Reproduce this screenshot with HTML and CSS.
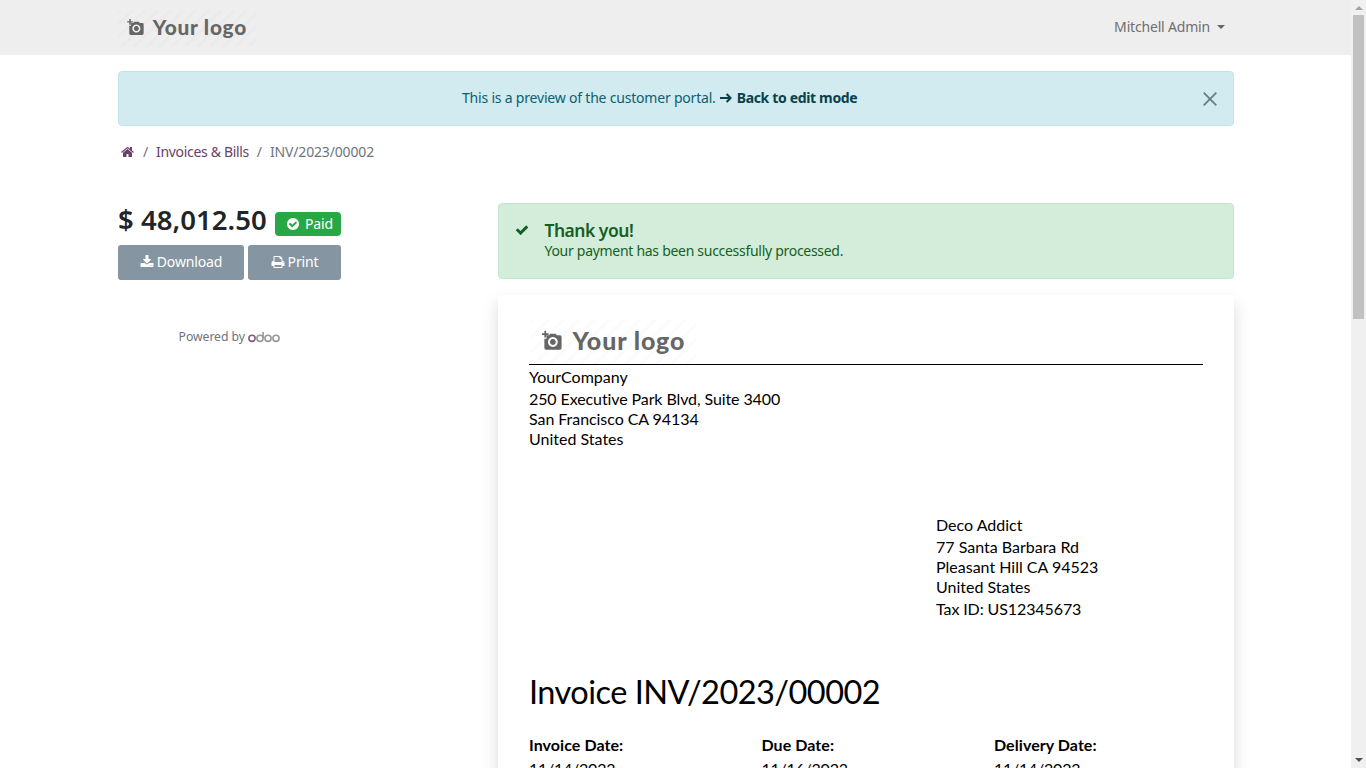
FILE: index.html
```html
<!DOCTYPE html>
<html lang="en">
<head>
<meta charset="utf-8">
<title>INV/2023/00002</title>
<link rel="stylesheet" href="styles.css">
</head>
<body>
<div class="viewport">
<div class="page">
  <header class="navbar">
    <div class="container navbar-inner">
      <svg class="logo logo-nav" viewBox="0 0 169 45"><use href="#brand"/></svg>
      <div class="user"><span class="t-user">Mitchell Admin</span><span class="caret"></span></div>
    </div>
  </header>
  <main class="container">
    <div class="alert alert-info">
      <div class="alert-text"><span class="t-preview">This is a preview of the customer portal.</span><svg class="arrow" viewBox="0 0 12 10"><path d="M0 5h10M6.6 1l4 4-4 4"/></svg><b class="t-back">Back to edit mode</b></div>
      <svg class="close" viewBox="0 0 14 14"><path d="M.7.7l12.6 12.6M13.3.7L.7 13.3"/></svg>
    </div>
    <nav class="breadcrumb">
      <svg class="fa home" viewBox="0 0 1792 1792"><path d="M1408 992v480q0 26-19 45t-45 19h-384v-384h-256v384h-384q-26 0-45-19t-19-45v-480q0-1 .5-3t.5-3l575-474 575 474q1 2 1 6zm223-69l-62 74q-8 9-21 11h-3q-13 0-21-7l-692-577-692 577q-12 8-24 7-13-2-21-11l-62-74q-8-10-7-23.5t11-21.5l719-599q32-26 76-26t76 26l244 204v-195q0-14 9-23t23-9h192q14 0 23 9t9 23v408l219 182q10 8 11 21.5t-7 23.5z"/></svg>
      <span class="sep">/</span><a class="t-inv">Invoices &amp; Bills</a><span class="sep">/</span><span class="t-num">INV/2023/00002</span>
    </nav>
    <div class="columns">
      <aside class="sidebar">
        <div class="total"><span class="amount">$ 48,012.50</span>
          <span class="badge"><svg class="fa" viewBox="0 0 1792 1792"><path d="M1412 734q0-28-18-46l-91-90q-19-19-45-19t-45 19l-408 407-226-226q-19-19-45-19t-45 19l-91 90q-18 18-18 46 0 27 18 45l362 362q19 19 45 19 27 0 46-19l543-543q18-18 18-45zm252 162q0 209-103 385.5t-279.5 279.5-385.5 103-385.5-103-279.5-279.5-103-385.5 103-385.5 279.5-279.5 385.5-103 385.5 103 279.5 279.5 103 385.5z"/></svg><span class="t-paid">Paid</span></span>
        </div>
        <div class="buttons">
          <button class="btn btn-download"><svg class="fa" viewBox="0 0 1792 1792"><path d="M1344 1344q0-26-19-45t-45-19-45 19-19 45 19 45 45 19 45-19 19-45zm256 0q0-26-19-45t-45-19-45 19-19 45 19 45 45 19 45-19 19-45zm128-224v320q0 40-28 68t-68 28h-1472q-40 0-68-28t-28-68v-320q0-40 28-68t68-28h465l135 136q58 56 136 56t136-56l136-136h464q40 0 68 28t28 68zm-325-569q17 41-14 70l-448 448q-18 19-45 19t-45-19l-448-448q-31-29-14-70 17-39 59-39h256v-448q0-26 19-45t45-19h256q26 0 45 19t19 45v448h256q42 0 59 39z"/></svg><span class="t-download">Download</span></button>
          <button class="btn btn-print"><svg class="fa" viewBox="0 0 1792 1792"><path d="M448 1536h896v-256h-896v256zm0-640h896v-384h-160q-40 0-68-28t-28-68v-160h-640v640zm1152 64q0-26-19-45t-45-19-45 19-19 45 19 45 45 19 45-19 19-45zm128 0v416q0 13-9.5 22.5t-22.5 9.5h-224v160q0 40-28 68t-68 28h-960q-40 0-68-28t-28-68v-160h-224q-13 0-22.5-9.5t-9.5-22.5v-416q0-79 56.5-135.5t135.5-56.5h64v-544q0-40 28-68t68-28h672q40 0 88 20t76 48l152 152q28 28 48 76t20 88v256h64q79 0 135.5 56.5t56.5 135.5z"/></svg><span class="t-print">Print</span></button>
        </div>
        <div class="powered"><span class="t-powered">Powered by</span>
          <svg class="odoo" viewBox="0 0 32 12"><circle class="first" cx="4" cy="7.3" r="3.1"/><circle cx="12" cy="7.3" r="3.1"/><path d="M15.1 7.3V1"/><circle cx="20" cy="7.3" r="3.1"/><circle cx="28" cy="7.3" r="3.1"/></svg>
        </div>
      </aside>
      <section class="content">
        <div class="alert-success">
          <svg class="fa check" viewBox="0 0 1792 1792"><path d="M1671 566q0 40-28 68l-724 724-136 136q-28 28-68 28t-68-28l-136-136-362-362q-28-28-28-68t28-68l136-136q28-28 68-28t68 28l294 295 656-657q28-28 68-28t68 28l136 136q28 28 28 68z"/></svg>
          <div><div class="thanks"><span class="t-thanks">Thank you!</span></div><div class="processed"><span class="t-proc">Your payment has been successfully processed.</span></div></div>
        </div>
        <article class="invoice">
          <svg class="logo logo-doc" viewBox="0 0 169 45">
            <defs>
              <pattern id="stripes" width="11" height="11" patternUnits="userSpaceOnUse" patternTransform="rotate(45)"><rect width="3" height="11" class="stripe"/></pattern>
              <g id="brand">
                <rect width="169" height="45" fill="url(#stripes)"/>
                <g transform="translate(-1.5 -.8)">
                <path class="mark" fill-rule="evenodd" d="M17 16.500h3l1.400-1.600h5.400l1.400 1.600h3q1.700 0 1.700 1.700v11.300q0 1.700-1.700 1.700H17q-1.700 0-1.700-1.700V20h2.200v-2.500zM24 18.300a5 5 0 1 0 .01 0zM24 20.300a3 3 0 1 1-.01 0z"/>
                <path class="plus" d="M16.200 11.800v6.800M12.800 15.200h6.800"/>
                </g>
                <text class="brand-text" x="42.500" y="30.700" textLength="114.500">Your logo</text>
              </g>
            </defs>
            <use href="#brand"/>
          </svg>
          <div class="company"><div class="first-line">YourCompany</div><div class="street">250 Executive Park Blvd, Suite 3400</div><div class="city">San Francisco CA 94134</div><div>United States</div></div>
          <div class="customer"><div class="first-line">Deco Addict</div><div>77 Santa Barbara Rd</div><div>Pleasant Hill CA 94523</div><div>United States</div><div class="tax">Tax ID: US12345673</div></div>
          <h1><span class="t-h1">Invoice INV/2023/00002</span></h1>
          <div class="dates">
            <div><b>Invoice Date:</b><p>11/14/2023</p></div>
            <div><b>Due Date:</b><p>11/16/2023</p></div>
            <div><b>Delivery Date:</b><p>11/14/2023</p></div>
          </div>
        </article>
      </section>
    </div>
  </main>
</div>
<div class="scrollbar"><span class="up"></span><span class="thumb"></span><span class="down"></span></div>
</div>
</body>
</html>
```
FILE: styles.css
```css
* { box-sizing: border-box; }
body { margin: 0; font: 14px/21px "Noto Sans", sans-serif; color: #212529; background: #fff; }
.viewport { display: flex; width: 1366px; height: 768px; overflow: hidden; }
.page { width: 1351px; height: 768px; overflow: hidden; }
.container { width: 1116px; margin-left: 118px; }
.navbar { height: 55px; background: #eee; }
.navbar-inner { display: flex; align-items: center; justify-content: space-between; height: 55px; padding-right: 9px; }
.logo { display: block; }
.logo-nav { width: 138px; height: 37px; margin-top: 1px; }
.stripe { fill: #000; opacity: .016; }
.mark { fill: #666; }
.plus { stroke: #666; stroke-width: 1.8; }
.brand-text { font: 900 25.500px Lato, sans-serif; fill: #666; }
.user { display: flex; align-items: center; gap: 7px; margin-bottom: 2px; color: #6f6f6f; }
.caret { border: 4px solid transparent; border-top-color: #666; border-bottom: 0; }
span { white-space: nowrap; }
.t-user { letter-spacing: -.18px; }
.t-preview { letter-spacing: -.2px; }
.t-back { letter-spacing: -.34px; }
.t-inv { letter-spacing: -.32px; }
.t-num { letter-spacing: -.16px; }
.t-paid, .t-download, .t-print { letter-spacing: -.15px; }
.t-thanks { letter-spacing: -.5px; }
.t-proc { letter-spacing: -.29px; }
.t-powered { letter-spacing: -.08px; }
.alert { display: flex; align-items: center; height: 55px; margin-top: 16px; border: 1px solid #bee5eb; border-radius: 4px; color: #0c6070; }
.alert-info { background: #d1ebf0; }
.alert-text { display: flex; align-items: center; margin-left: 343px; width: 741px; height: 21px; margin-bottom: 2px; }
.alert-text b { color: #09414c; white-space: nowrap; }
.arrow { width: 12px; height: 10px; margin: 0 5px 0 4px; fill: none; stroke: #09414c; stroke-width: 2; }
.close { width: 14px; height: 14px; fill: none; stroke: #647e84; stroke-width: 1.8; }
.fa { width: 14px; height: 14px; fill: currentColor; flex: none; }
.breadcrumb { display: flex; align-items: center; height: 21px; margin: 15px 0 0 3px; color: #6c757d; }
.home, .breadcrumb a { color: #6b3e66; }
.sep { width: 6px; margin: 0 7.500px; text-align: center; }
.columns { display: flex; gap: 157px; margin-top: 41px; }
.sidebar { width: 223px; }
.total { display: flex; align-items: flex-start; justify-content: space-between; height: 42px; }
.amount { font-size: 27.500px; font-weight: 600; line-height: 34px; letter-spacing: .05px; }
.badge { display: flex; align-items: center; width: 66px; height: 24px; margin-top: 9px; padding: 0 0 1px 11px; gap: 5px; border-radius: 4px; background: #28a745; color: #fff; }
.buttons { display: flex; gap: 4px; }
.btn { display: flex; align-items: center; justify-content: center; gap: 3px; height: 35px; padding: 0 0 2px; border: 0; border-radius: 3px; background: #8595a2; color: #fff; font: inherit; }
.btn-download { width: 126px; }
.btn-print { width: 93px; }
.powered { display: flex; align-items: center; justify-content: center; height: 20px; margin-top: 46px; color: #6c757d; font-size: 12.250px; gap: 3.500px; }
.odoo { width: 32px; height: 12px; margin-top: 1px; fill: none; stroke: #999; stroke-width: 1.6; }
.odoo .first { stroke: #875a7b; }
.content { width: 736px; }
.alert-success { display: flex; height: 76px; padding: 16px 15.500px; gap: 16px; border: 1px solid #c3e6cb; border-radius: 4px; background: #d4ecda; color: #155f24; }
.check { margin-top: 3px; }
.thanks { font-size: 17.500px; font-weight: 600; line-height: 21px; }
.processed { line-height: 20px; }
.invoice { height: 600px; margin-top: 16px; padding: 25px 31px 0; background: #fff; box-shadow: 0 8px 16px rgba(0,0,0,.15); font: 16px/20px Lato, sans-serif; font-variant-ligatures: none; color: #000; }
.logo-doc { width: 169px; height: 44px; }
.company { height: 148px; padding-top: 2px; border-top: 1px solid #000; }
.first-line { margin-bottom: 2px; }
.street { letter-spacing: -.1px; }
.city { letter-spacing: -.06px; }
.customer { margin: 3px 0 0 407px; }
.tax { margin-top: 2px; letter-spacing: -.1px; }
.invoice h1 { margin: 53px 0 0; font-size: 32.500px; font-weight: 400; line-height: 40px; letter-spacing: -.53px; }
.dates { display: flex; margin-top: 23px; }
.dates > div { width: 232.500px; flex: none; }
.dates b { letter-spacing: .06px; }
.dates p { margin: 4px 0 0; letter-spacing: -.25px; }
.scrollbar { display: flex; flex-direction: column; align-items: center; width: 15px; height: 768px; background: #f0f0f0; }
.up { margin: 6px 0 5px; border: 4px solid transparent; border-bottom-color: #a3a3a3; border-top: 0; }
.thumb { width: 11px; height: 304px; background: #c1c1c1; }
.down { margin: auto 0 6px; border: 4px solid transparent; border-top-color: #505050; border-bottom: 0; }
```
